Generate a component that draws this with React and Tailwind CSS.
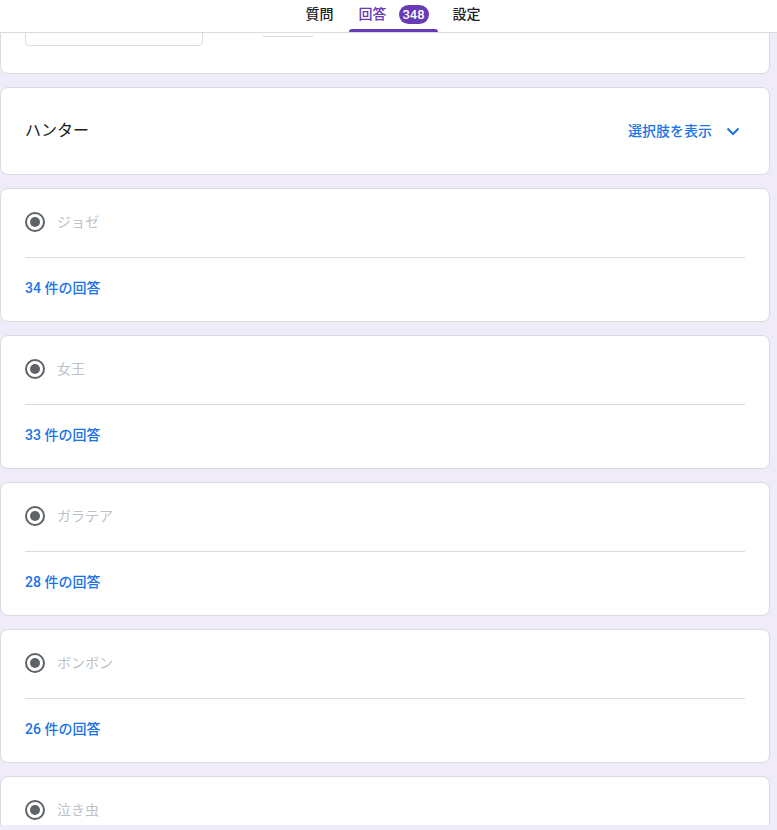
import React from "react";

const font = { fontFamily: 'Roboto, "Noto Sans CJK JP", sans-serif' };

function Radio() {
  return (
    <div className="w-5 h-5 rounded-full border-2 border-[#5f6368] flex items-center justify-center shrink-0">
      <div className="w-[10px] h-[10px] rounded-full bg-[#5f6368]" />
    </div>
  );
}

function OptionCard({ label, count }) {
  return (
    <div className="bg-white border border-[#dadce0] rounded-lg px-6 pt-[23px] pb-[23px] shrink-0">
      <div className="flex items-center gap-3 h-5">
        <Radio />
        <span className="text-[14px] text-[#bdc1c6]">{label}</span>
      </div>
      <div className="mt-[25px] border-t border-[#dadce0]" />
      <div className="mt-5 h-5 leading-5 text-[14px] font-medium text-[#1a73e8]">
        {count} 件の回答
      </div>
    </div>
  );
}

export default function App() {
  const options = [
    ["ジョゼ", 34],
    ["女王", 33],
    ["ガラテア", 28],
    ["ボンボン", 26],
    ["泣き虫", 24],
  ];
  return (
    <div className="w-[777px] h-[830px] bg-[#f0ebf8] overflow-hidden" style={font}>
      <div className="h-[33px] bg-white border-b border-[#dadce0] flex justify-center">
        <div className="flex items-stretch h-full pl-[9px]">
          <div className="px-[15px] pb-[4px] flex items-center text-[14px] font-medium text-[#202124]">質問</div>
          <div className="relative pl-[10px] pr-[9px] pb-[4px] flex items-center gap-3 text-[14px] font-medium text-[#673ab7]">
            <span>回答</span>
            <span className="h-[19px] w-[30px] rounded-full bg-[#673ab7] text-white text-[13px] flex items-center justify-center leading-none">348</span>
            <div className="absolute left-0 right-0 bottom-0 h-[3px] rounded-t-[3px] bg-[#673ab7]" />
          </div>
          <div className="px-[15px] pb-[4px] flex items-center text-[14px] font-medium text-[#202124]">設定</div>
        </div>
      </div>
      <div className="h-[792px] overflow-hidden pr-[7px]">
        <div className="flex flex-col gap-[13px] -mt-[52px]">
          <div className="bg-white border border-[#dadce0] rounded-lg px-6 pt-6 pb-[27px] shrink-0">
            <div className="flex items-start">
              <div className="w-[178px] h-10 border border-[#dadce0] rounded" />
              <div className="ml-[60px] w-[50px] h-[31px] border-b border-[#dadce0]" />
            </div>
          </div>
          <div className="bg-white border border-[#dadce0] rounded-lg px-6 h-[88px] flex items-center justify-between shrink-0">
            <span className="text-[16px] text-[#202124]">ハンター</span>
            <div className="flex items-center gap-[14px] text-[14px] font-medium text-[#1a73e8] pr-[5px]">
              <span>選択肢を表示</span>
              <svg width="14" height="10" viewBox="0 0 14 10" fill="none">
                <path d="M1.5 2.5 L7 8 L12.5 2.5" stroke="#1a73e8" strokeWidth="2" />
              </svg>
            </div>
          </div>
          {options.map(([l, c]) => (
            <OptionCard key={l} label={l} count={c} />
          ))}
        </div>
      </div>
    </div>
  );
}
